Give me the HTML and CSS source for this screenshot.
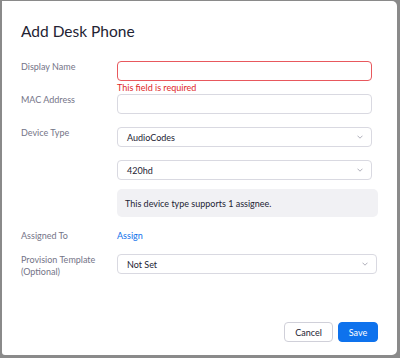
FILE: index.html
```html
<!DOCTYPE html>
<html>
<head>
<meta charset="utf-8">
<link rel="stylesheet" href="styles.css">
</head>
<body>
<div class="modal">
  <h1 class="title">Add Desk Phone</h1>
  <div class="form">
    <div class="row row-error">
      <div class="label">Display Name</div>
      <div class="field">
        <div class="input input-error"></div>
        <div class="error">This field is required</div>
      </div>
    </div>
    <div class="row">
      <div class="label">MAC Address</div>
      <div class="field">
        <div class="input"></div>
      </div>
    </div>
    <div class="row">
      <div class="label">Device Type</div>
      <div class="field field-wide">
        <div class="input select narrow"><span>AudioCodes</span><svg class="chev" width="6" height="4" viewBox="0 0 6 4"><path d="M0.5 0.7 L3 3.2 L5.5 0.7" fill="none" stroke="#9a9aa8" stroke-width="0.8"/></svg></div>
        <div class="input select narrow gap"><span>420hd</span><svg class="chev" width="6" height="4" viewBox="0 0 6 4"><path d="M0.5 0.7 L3 3.2 L5.5 0.7" fill="none" stroke="#9a9aa8" stroke-width="0.8"/></svg></div>
        <div class="info">This device type supports 1 assignee.</div>
      </div>
    </div>
    <div class="row row-assign">
      <div class="label">Assigned To</div>
      <div class="field"><a class="link">Assign</a></div>
    </div>
    <div class="row">
      <div class="label">Provision Template<br>(Optional)</div>
      <div class="field field-wide">
        <div class="input select wide"><span>Not Set</span><svg class="chev" width="6" height="4" viewBox="0 0 6 4"><path d="M0.5 0.7 L3 3.2 L5.5 0.7" fill="none" stroke="#9a9aa8" stroke-width="0.8"/></svg></div>
      </div>
    </div>
  </div>
  <div class="footer">
    <button class="btn btn-cancel">Cancel</button>
    <button class="btn btn-save">Save</button>
  </div>
</div>
</body>
</html>
```

FILE: styles.css
```css
html, body {
  margin: 0;
  padding: 0;
}
body {
  width: 400px;
  height: 358px;
  background: #8a8a8a;
  font-family: Lato, "Open Sans", sans-serif;
  overflow: hidden;
}
.modal {
  box-sizing: border-box;
  margin: 1px 0 0 2px;
  width: 395px;
  height: 354px;
  background: #ffffff;
  border-radius: 0 5px 5px 3px;
  padding: 20px 19px 13px 19px;
  display: flex;
  flex-direction: column;
}
.title {
  margin: 0;
  font-size: 15.5px;
  line-height: 20px;
  font-weight: 400;
  color: #232333;
}
.form {
  margin-top: 20px;
  display: flex;
  flex-direction: column;
}
.row {
  display: flex;
  margin-bottom: 13px;
}
.row-error {
  margin-bottom: 0;
}
.row-assign {
  margin-bottom: 12px;
}
.label {
  width: 96px;
  flex: none;
  font-size: 9px;
  line-height: 12px;
  color: #747487;
}
.field {
  width: 255px;
  display: flex;
  flex-direction: column;
}
.field-wide {
  width: 261px;
}
.input {
  box-sizing: border-box;
  height: 20px;
  border: 1px solid #d9d9e1;
  border-radius: 4px;
  background: #fff;
}
.input-error {
  border-color: #e8585d;
}
.error {
  margin-top: 1px;
  font-size: 9px;
  line-height: 12px;
  color: #e02828;
}
.select {
  display: flex;
  align-items: center;
  justify-content: space-between;
  padding: 0 8px 0 9px;
  font-size: 9px;
  color: #232333;
}
.narrow {
  width: 255px;
}
.wide {
  width: 260px;
}
.gap {
  margin-top: 13px;
}
.chev {
  display: block;
}
.info {
  box-sizing: border-box;
  margin-top: 9px;
  height: 28px;
  background: #f1f1f4;
  border-radius: 5px;
  padding-left: 8px;
  display: flex;
  align-items: center;
  font-size: 9px;
  color: #232333;
}
.link {
  font-size: 9px;
  line-height: 12px;
  color: #0e71eb;
}
.footer {
  margin-top: auto;
  display: flex;
  justify-content: flex-end;
  gap: 5px;
}
.btn {
  box-sizing: border-box;
  height: 20px;
  border-radius: 4px;
  font-family: Lato, "Open Sans", sans-serif;
  font-size: 9px;
  padding: 0;
  cursor: pointer;
}
.btn-cancel {
  width: 49px;
  background: #fff;
  border: 1px solid #d0d0d9;
  color: #232333;
}
.btn-save {
  width: 40px;
  background: #0e72ed;
  border: 1px solid #0e72ed;
  color: #fff;
}
```
